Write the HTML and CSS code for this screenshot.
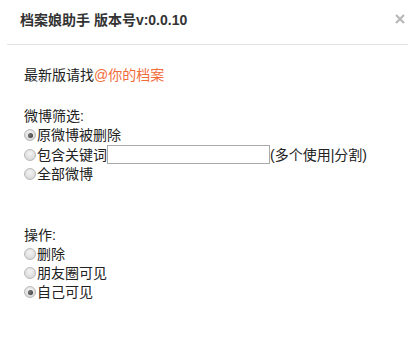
FILE: index.html
```html
<!DOCTYPE html>
<html lang="zh-CN">
<head>
<meta charset="utf-8">
<title>档案娘助手</title>
<link rel="stylesheet" href="styles.css">
</head>
<body>
<div class="dialog">
  <div class="header">
    <span class="title">档案娘助手 版本号v:0.0.10</span>
    <span class="close"><svg width="10" height="10" viewBox="0 0 10 10"><path d="M1 1L9 9M9 1L1 9" stroke="#b8b8b8" stroke-width="2.2" fill="none"/></svg></span>
  </div>
  <div class="divider"></div>
  <div class="content">
    <div class="line">最新版请找<a class="link" href="#">@你的档案</a></div>
    <div class="group first">
      <div class="line">微博筛选:</div>
      <label class="line"><input type="radio" name="f" checked>原微博被删除</label>
      <label class="line row-input"><input type="radio" name="f">包含关键词<input type="text" class="kw">(多个使用|分割)</label>
      <label class="line"><input type="radio" name="f">全部微博</label>
    </div>
    <div class="group second">
      <div class="line">操作:</div>
      <label class="line"><input type="radio" name="o">删除</label>
      <label class="line"><input type="radio" name="o">朋友圈可见</label>
      <label class="line"><input type="radio" name="o" checked>自己可见</label>
    </div>
  </div>
</div>
</body>
</html>
```
FILE: styles.css
```css
html, body {
  margin: 0;
  padding: 0;
  background: #fff;
}
body {
  font-family: "Liberation Sans", "Noto Sans CJK SC", sans-serif;
  font-size: 14px;
  color: #222;
}
.dialog {
  width: 408px;
}
.header {
  height: 38px;
  display: flex;
  align-items: center;
  justify-content: space-between;
  padding: 0 3px 0 20px;
}
.title {
  font-weight: bold;
  color: #333;
  font-size: 14px;
}
.close {
  display: flex;
  margin-top: -1px;
}
.divider {
  margin: 6px 0 0 7px;
  height: 1px;
  background: #e3e3e3;
}
.content {
  padding: 21px 0 0 24px;
}
.line {
  display: block;
  height: 19px;
  line-height: 19px;
  white-space: nowrap;
}
.row-input {
  height: 20px;
  line-height: 20px;
}
.link {
  color: #f26b3a;
  text-decoration: none;
}
.group.first {
  margin-top: 22px;
}
.group.second {
  margin-top: 42px;
}
input[type="radio"] {
  -webkit-appearance: none;
  appearance: none;
  width: 12px;
  height: 12px;
  margin: 0 1px 0 0;
  border: 1px solid #b9b9b9;
  border-radius: 50%;
  background: radial-gradient(circle at 50% 35%, #f4f4f4 0%, #dcdcdc 70%, #cfcfcf 100%);
  vertical-align: -1px;
  box-sizing: border-box;
  position: relative;
}
input[type="radio"]:checked::after {
  content: "";
  position: absolute;
  left: 2.5px;
  top: 2.5px;
  width: 5px;
  height: 5px;
  border-radius: 50%;
  background: radial-gradient(circle at 40% 40%, #777 0%, #333 100%);
}
.kw {
  width: 163px;
  height: 19px;
  margin: 0;
  padding: 0 2px;
  border: 1px solid #a9a9a9;
  box-sizing: border-box;
  vertical-align: top;
  font: inherit;
}
```
